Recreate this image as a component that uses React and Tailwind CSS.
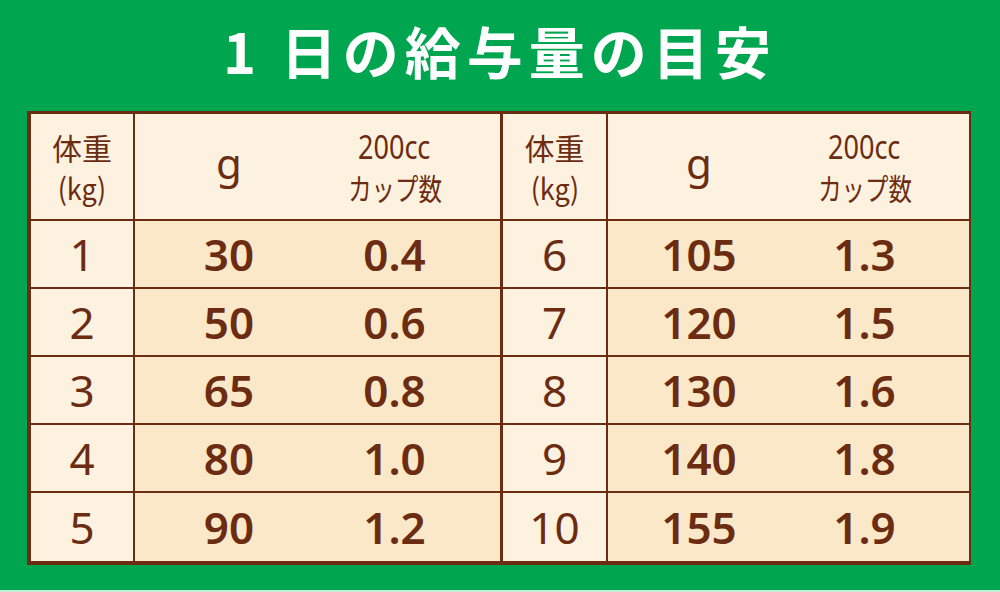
import React from 'react';

const brown = 'text-[#6b2c12]';

const left = [
  { kg: '1', g: '30', cup: '0.4' },
  { kg: '2', g: '50', cup: '0.6' },
  { kg: '3', g: '65', cup: '0.8' },
  { kg: '4', g: '80', cup: '1.0' },
  { kg: '5', g: '90', cup: '1.2' },
];

const right = [
  { kg: '6', g: '105', cup: '1.3' },
  { kg: '7', g: '120', cup: '1.5' },
  { kg: '8', g: '130', cup: '1.6' },
  { kg: '9', g: '140', cup: '1.8' },
  { kg: '10', g: '155', cup: '1.9' },
];

const sans = { fontFamily: '"Noto Sans", "Noto Sans CJK JP", sans-serif' };
const cjk = { fontFamily: '"Noto Sans CJK JP", "Noto Sans", sans-serif' };

function Half({ rows, kgW, gW, cupPad, divider }) {
  return (
    <div className={`flex flex-col ${divider ? 'border-r-[3px] border-[#6b2c12]' : ''}`}>
      {/* header */}
      <div className="flex h-[107px] border-b-2 border-[#6b2c12] bg-[#fdf2e0]">
        <div
          className={`${kgW} shrink-0 border-r-2 border-[#6b2c12] flex flex-col items-center justify-center ${brown}`}
          style={cjk}
        >
          <span className="text-[30px] leading-[40px]">体重</span>
          <span className="inline-block scale-x-90 text-[30px] leading-[40px]">(kg)</span>
        </div>
        <div className={`${gW} shrink-0 flex items-center justify-center text-[42px] pb-[8px] ${brown}`} style={sans}>
          g
        </div>
        <div className={`flex-1 flex flex-col items-center justify-center ${cupPad} ${brown}`}>
          <span className="inline-block scale-x-[0.82] text-[33px] leading-[40px]" style={sans}>200cc</span>
          <span className="inline-block scale-x-[0.78] text-[30px] leading-[40px]" style={cjk}>カップ数</span>
        </div>
      </div>
      {rows.map((r, i) => (
        <div
          key={r.kg}
          className={`flex h-[68px] ${i < rows.length - 1 ? 'border-b-2 border-[#6b2c12]' : ''}`}
        >
          <div
            className={`${kgW} shrink-0 border-r-2 border-[#6b2c12] bg-[#fdf2e0] flex items-center justify-center text-[44px] ${brown}`}
            style={sans}
          >
            {r.kg}
          </div>
          <div className="flex-1 flex bg-[#fae8c8]">
            <div className={`${gW} shrink-0 flex items-center justify-center text-[44px] font-semibold ${brown}`} style={sans}>
              {r.g}
            </div>
            <div className={`flex-1 flex items-center justify-center text-[44px] font-semibold ${cupPad} ${brown}`} style={sans}>
              {r.cup}
            </div>
          </div>
        </div>
      ))}
    </div>
  );
}

export default function App() {
  return (
    <div className="w-[1000px] h-[592px] bg-[#00a64f] flex flex-col overflow-hidden">
      <div className="h-[111px] flex items-center justify-center pb-[12px]">
        <h1 className="text-white text-[56px] font-bold tracking-[6px] leading-none" style={cjk}>
          1 日の給与量の目安
        </h1>
      </div>
      <div className="ml-[27px] w-[944px] h-[454px] border-t-[3px] border-l-[4px] border-b-[4px] border-r-[2px] border-[#6b2c12] grid grid-cols-[472px_1fr]">
        <Half rows={left} kgW="w-[104px]" gW="w-[188px]" cupPad="pr-[34px]" divider />
        <Half rows={right} kgW="w-[105px]" gW="w-[182px]" cupPad="pr-[30px]" />
      </div>
      <div className="flex-1" />
      <div className="h-[2px] bg-[#c4ecd3]" />
    </div>
  );
}
